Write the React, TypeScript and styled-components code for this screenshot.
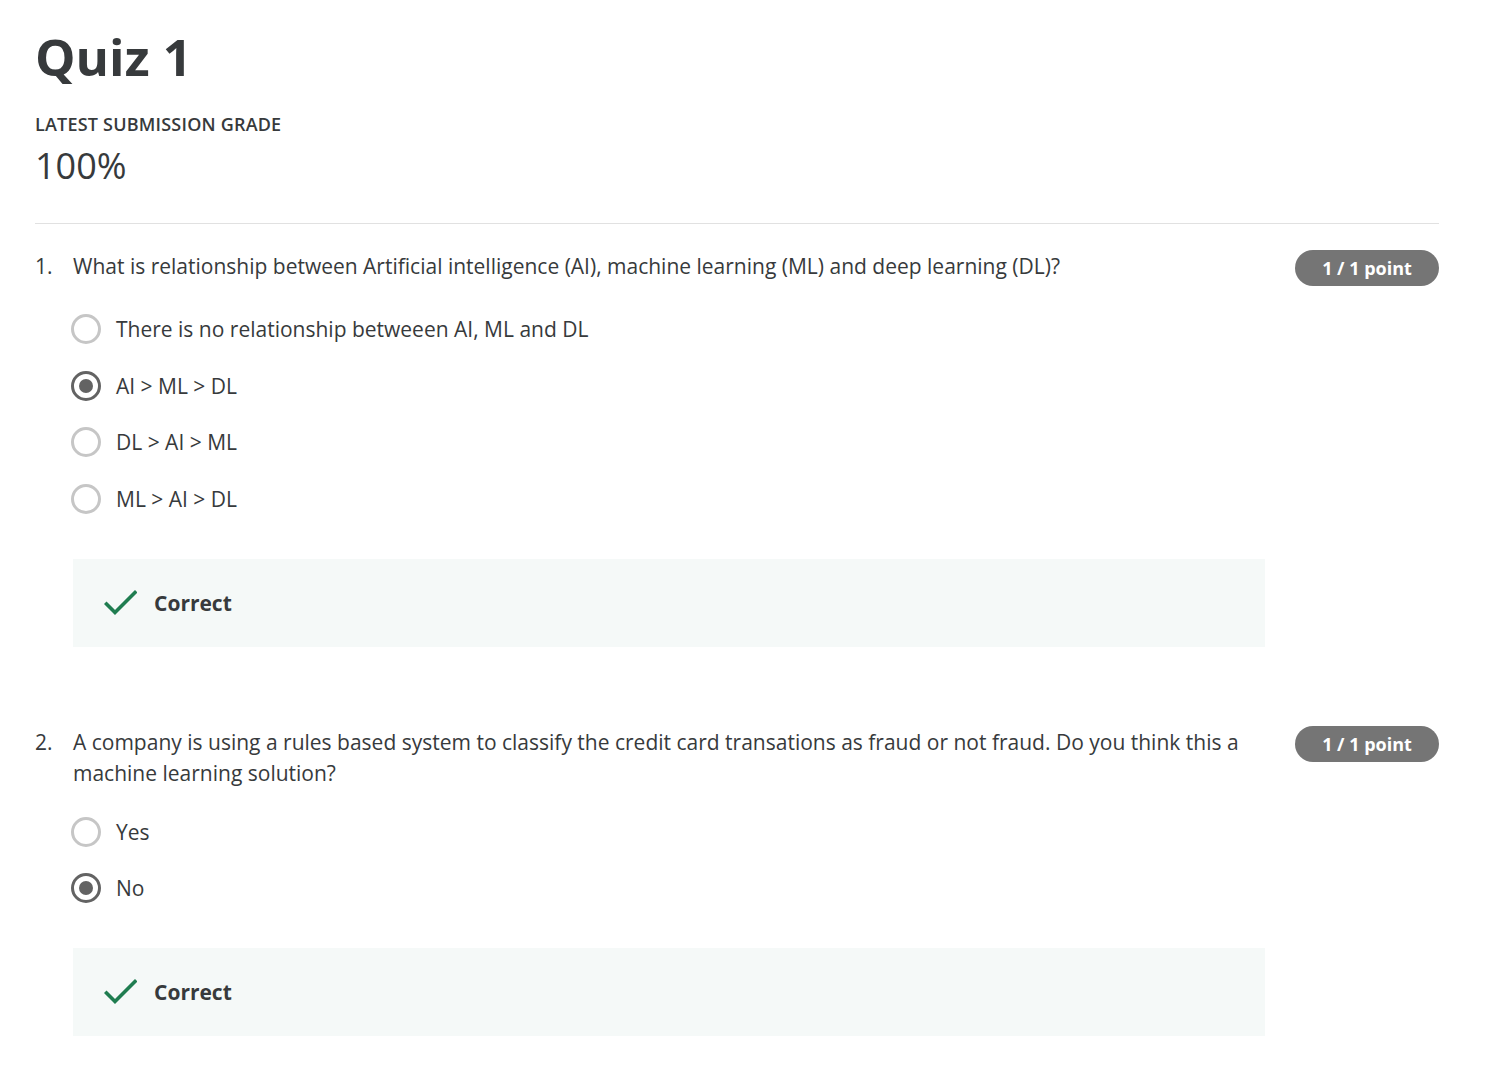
import React from "react";
import styled, { createGlobalStyle } from "styled-components";

const GlobalStyle = createGlobalStyle`
  html, body { margin: 0; padding: 0; background: #ffffff; }
  body { font-family: "Open Sans", "Noto Sans", sans-serif; color: #373a3c; }
  * { box-sizing: border-box; }
`;

const Page = styled.main`
  width: 1404px;
  margin-left: 35px;
  padding-top: 22px;
`;

const Title = styled.h1`
  margin: 0;
  font-size: 51px;
  line-height: 68px;
  font-weight: 700;
  color: #373a3c;
`;

const GradeLabel = styled.div`
  margin-top: 22px;
  font-size: 18px;
  line-height: 24px;
  font-weight: 600;
  letter-spacing: 0.2px;
  text-transform: uppercase;
  color: #373a3c;
`;

const GradeValue = styled.div`
  margin-top: 6px;
  font-size: 36px;
  line-height: 48px;
  font-weight: 400;
  color: #373a3c;
`;

const Rule = styled.hr`
  margin: 33px 0 0;
  border: 0;
  border-top: 1px solid #e1e1e1;
`;

const QuestionBlock = styled.section<{ $first?: boolean }>`
  margin-top: ${(p) => (p.$first ? "27px" : "80px")};
`;

const QuestionHeader = styled.div`
  display: grid;
  grid-template-columns: 38px 1fr 144px;
  align-items: start;
`;

const Number = styled.span`
  font-size: 21px;
  line-height: 31px;
  color: #373a3c;
`;

const Prompt = styled.p`
  margin: 0;
  padding-right: 46px;
  font-size: 21px;
  line-height: 31px;
  color: #373a3c;
`;

const Badge = styled.span`
  display: flex;
  align-items: center;
  justify-content: center;
  height: 36px;
  margin-top: -1px;
  border-radius: 18px;
  background: #757575;
  color: #ffffff;
  font-size: 18px;
  font-weight: 700;
`;

const Body = styled.div`
  margin-left: 38px;
  width: 1192px;
`;

const Options = styled.ul`
  list-style: none;
  margin: 28px 0 0;
  padding: 0;
  display: flex;
  flex-direction: column;
  gap: 26.5px;
`;

const Option = styled.li`
  display: flex;
  align-items: center;
  gap: 15px;
  margin-left: -2px;
  height: 30px;
  font-size: 21px;
  color: #373a3c;
`;

const Radio = styled.span<{ $checked?: boolean }>`
  width: 30px;
  height: 30px;
  flex: none;
  border-radius: 50%;
  border: ${(p) => (p.$checked ? "3.5px solid #636363" : "3px solid #c6c6c6")};
  display: flex;
  align-items: center;
  justify-content: center;
  &::after {
    content: "";
    display: ${(p) => (p.$checked ? "block" : "none")};
    width: 14px;
    height: 14px;
    border-radius: 50%;
    background: #636363;
  }
`;

const Feedback = styled.div`
  margin-top: 45px;
  height: 88px;
  background: #f5f9f8;
  display: flex;
  align-items: center;
  padding-left: 31px;
  gap: 17px;
`;

const FeedbackText = styled.span`
  font-size: 21px;
  font-weight: 700;
  color: #373a3c;
`;

const Check = () => (
  <svg width="33" height="28" viewBox="0 0 33 28" fill="none">
    <path d="M2.5 15 L11 23.5 L31 3.5" stroke="#1f7d50" strokeWidth="3.6" strokeLinecap="square" />
  </svg>
);

type Q = { n: number; text: string; options: string[]; selected: number };

const questions: Q[] = [
  {
    n: 1,
    text: "What is relationship between Artificial intelligence (AI), machine learning (ML) and deep learning (DL)?",
    options: ["There is no relationship betweeen AI, ML and DL", "AI > ML > DL", "DL > AI > ML", "ML > AI > DL"],
    selected: 1,
  },
  {
    n: 2,
    text: "A company is using a rules based system to classify the credit card transations as fraud or not fraud. Do you think this a machine learning solution?",
    options: ["Yes", "No"],
    selected: 1,
  },
];

export default function App() {
  return (
    <>
      <GlobalStyle />
      <Page>
        <Title>Quiz 1</Title>
        <GradeLabel>Latest Submission Grade</GradeLabel>
        <GradeValue>100%</GradeValue>
        <Rule />
        {questions.map((q, i) => (
          <QuestionBlock key={q.n} $first={i === 0}>
            <QuestionHeader>
              <Number>{q.n}.</Number>
              <Prompt>{q.text}</Prompt>
              <Badge>1 / 1 point</Badge>
            </QuestionHeader>
            <Body>
              <Options>
                {q.options.map((o, j) => (
                  <Option key={o}>
                    <Radio $checked={j === q.selected} />
                    <span>{o}</span>
                  </Option>
                ))}
              </Options>
              <Feedback>
                <Check />
                <FeedbackText>Correct</FeedbackText>
              </Feedback>
            </Body>
          </QuestionBlock>
        ))}
      </Page>
    </>
  );
}
